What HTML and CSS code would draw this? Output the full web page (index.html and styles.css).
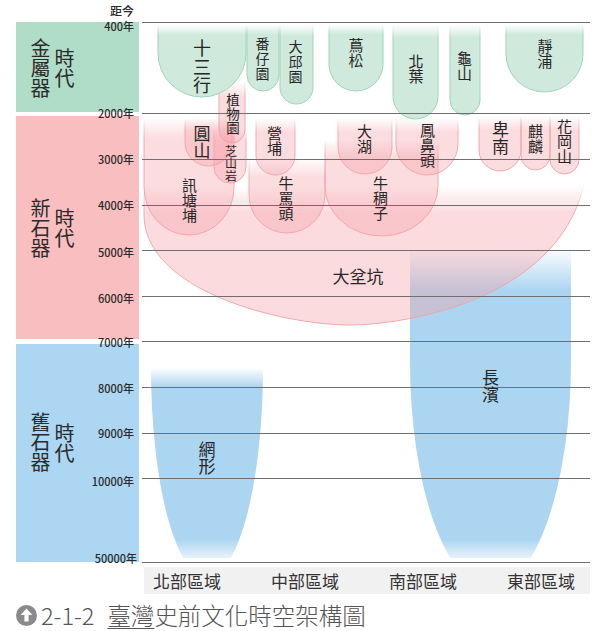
FILE: index.html
```
<!DOCTYPE html>
<html lang="zh-Hant">
<head>
<meta charset="utf-8">
<title>臺灣史前文化時空架構圖</title>
<link rel="stylesheet" href="styles.css">
</head>
<body>
<div class="figure">
  <div class="eras">
    <div class="era metal"><span class="col">金屬器</span><span class="col col2">時代</span></div>
    <div class="era neo"><span class="col">新石器</span><span class="col col2">時代</span></div>
    <div class="era paleo"><span class="col">舊石器</span><span class="col col2">時代</span></div>
  </div>
  <div class="regions">
    <span>北部區域</span><span>中部區域</span><span>南部區域</span><span>東部區域</span>
  </div>
  <div class="caption">
    <svg class="cap-icon" width="21" height="21" viewBox="0 0 21 21"><circle cx="10.5" cy="10.5" r="10.5" fill="#8a8a8a"/><path d="M10.5 3.6 L16.4 10 H12.6 V16.6 H8.4 V10 H4.6 Z" fill="#fff"/></svg>
    <span class="cap-num">2-1-2</span>
    <span class="cap-title"><span class="u">臺灣</span>史前文化時空架構圖</span>
  </div>

  <svg class="chart" width="616" height="565" viewBox="0 0 616 565">
    <defs>
      <linearGradient id="gF" x1="0" y1="0" x2="0" y2="1">
        <stop offset="0" stop-color="#cfeadd" stop-opacity="0"/>
        <stop offset="0.14" stop-color="#cfeadd" stop-opacity="1"/>
        <stop offset="1" stop-color="#cfeadd" stop-opacity="1"/>
      </linearGradient>
      <linearGradient id="gS" x1="0" y1="0" x2="0" y2="1">
        <stop offset="0" stop-color="#9ed3ba" stop-opacity="0"/>
        <stop offset="0.14" stop-color="#9ed3ba" stop-opacity="1"/>
        <stop offset="1" stop-color="#9ed3ba" stop-opacity="1"/>
      </linearGradient>
      <linearGradient id="pF" x1="0" y1="0" x2="0" y2="1">
        <stop offset="0" stop-color="#f4a0a8" stop-opacity="0"/>
        <stop offset="0.25" stop-color="#f4a0a8" stop-opacity="0.36"/>
        <stop offset="1" stop-color="#f4a0a8" stop-opacity="0.36"/>
      </linearGradient>
      <linearGradient id="pS" x1="0" y1="0" x2="0" y2="1">
        <stop offset="0" stop-color="#f1a1a9" stop-opacity="0"/>
        <stop offset="0.25" stop-color="#f1a1a9" stop-opacity="0.9"/>
        <stop offset="1" stop-color="#f1a1a9" stop-opacity="0.9"/>
      </linearGradient>
      <linearGradient id="pFT" x1="0" y1="0" x2="0" y2="1">
        <stop offset="0" stop-color="#f4a0a8" stop-opacity="0"/>
        <stop offset="0.17" stop-color="#f4a0a8" stop-opacity="0.36"/>
        <stop offset="1" stop-color="#f4a0a8" stop-opacity="0.36"/>
      </linearGradient>
      <linearGradient id="pST" x1="0" y1="0" x2="0" y2="1">
        <stop offset="0" stop-color="#f1a1a9" stop-opacity="0"/>
        <stop offset="0.17" stop-color="#f1a1a9" stop-opacity="0.9"/>
        <stop offset="1" stop-color="#f1a1a9" stop-opacity="0.9"/>
      </linearGradient>
      <linearGradient id="pBig" gradientUnits="userSpaceOnUse" x1="0" y1="185" x2="0" y2="325">
        <stop offset="0" stop-color="#f4a0a8" stop-opacity="0"/>
        <stop offset="0.2" stop-color="#f4a0a8" stop-opacity="0.38"/>
        <stop offset="1" stop-color="#f4a0a8" stop-opacity="0.38"/>
      </linearGradient>
      <linearGradient id="pBigS" gradientUnits="userSpaceOnUse" x1="0" y1="185" x2="0" y2="325">
        <stop offset="0" stop-color="#f1a1a9" stop-opacity="0"/>
        <stop offset="0.2" stop-color="#f1a1a9" stop-opacity="0.9"/>
        <stop offset="1" stop-color="#f1a1a9" stop-opacity="0.9"/>
      </linearGradient>
      <linearGradient id="bW" gradientUnits="userSpaceOnUse" x1="0" y1="368" x2="0" y2="558">
        <stop offset="0" stop-color="#acd5f1" stop-opacity="0"/>
        <stop offset="0.1" stop-color="#acd5f1" stop-opacity="1"/>
        <stop offset="0.9" stop-color="#acd5f1" stop-opacity="1"/>
        <stop offset="1" stop-color="#acd5f1" stop-opacity="0.3"/>
      </linearGradient>
      <linearGradient id="bC" gradientUnits="userSpaceOnUse" x1="0" y1="247" x2="0" y2="558">
        <stop offset="0" stop-color="#acd5f1" stop-opacity="0"/>
        <stop offset="0.14" stop-color="#acd5f1" stop-opacity="1"/>
        <stop offset="0.94" stop-color="#acd5f1" stop-opacity="1"/>
        <stop offset="1" stop-color="#acd5f1" stop-opacity="0.3"/>
      </linearGradient>
      <clipPath id="clipB"><rect x="0" y="0" width="616" height="558"/></clipPath>
    </defs>

    <!-- paleolithic -->
    <g clip-path="url(#clipB)">
      <path d="M151 368 A56 210 0 0 0 263 368 Z" fill="url(#bW)"/>
      <path d="M410 247 V361 A80.5 227 0 0 0 571 361 V247 Z" fill="url(#bC)"/>
    </g>

    <!-- neolithic -->
    <path d="M144 185 V215 C144 290 280 325 351 325 C395 325 555 305 584 185 Z" fill="url(#pBig)" stroke="url(#pBigS)"/>
    <g stroke-width="1">
      <path d="M144 118 V187 A45 48 0 0 0 234 187 V118 Z" fill="url(#pFT)" stroke="url(#pST)"/>
      <path d="M249 158 V195 A38 38 0 0 0 325 195 V158 Z" fill="url(#pF)" stroke="url(#pS)"/>
      <path d="M325 140 V186 A56.5 50 0 0 0 438 186 V140 Z" fill="url(#pFT)" stroke="url(#pST)"/>
      <path d="M214 128 V167 A16 16 0 0 0 246 167 V128 Z" fill="url(#pF)" stroke="url(#pS)"/>
      <path d="M219 82 V130 A13 13 0 0 0 245 130 V82 Z" fill="url(#pF)" stroke="url(#pS)"/>
      <path d="M185 118 V142.5 A23.5 23.5 0 0 0 232 142.5 V118 Z" fill="url(#pF)" stroke="url(#pS)"/>
      <path d="M256 118 V155.5 A19.5 19.5 0 0 0 295 155.5 V118 Z" fill="url(#pF)" stroke="url(#pS)"/>
      <path d="M338 118 V147 A27 27 0 0 0 392 147 V118 Z" fill="url(#pF)" stroke="url(#pS)"/>
      <path d="M396 118 V144 A31 31 0 0 0 458 144 V118 Z" fill="url(#pF)" stroke="url(#pS)"/>
      <path d="M479 116 V150 A21 21 0 0 0 521 150 V116 Z" fill="url(#pF)" stroke="url(#pS)"/>
      <path d="M521 116 V155.5 A14.5 14.5 0 0 0 550 155.5 V116 Z" fill="url(#pF)" stroke="url(#pS)"/>
      <path d="M550 116 V159.5 A14.5 14.5 0 0 0 579 159.5 V116 Z" fill="url(#pF)" stroke="url(#pS)"/>
    </g>

    <!-- metal age -->
    <g fill="url(#gF)" stroke="url(#gS)">
      <path d="M158 25 V53 A44 44 0 0 0 246 53 V25 Z"/>
      <path d="M247 25 V75 A16 16 0 0 0 279 75 V25 Z"/>
      <path d="M280 25 V87.5 A16.5 16.5 0 0 0 313 87.5 V25 Z"/>
      <path d="M329 25 V64 A27 27 0 0 0 383 64 V25 Z"/>
      <path d="M393 25 V96.5 A22.5 22.5 0 0 0 438 96.5 V25 Z"/>
      <path d="M450 25 V100 A15 15 0 0 0 480 100 V25 Z"/>
      <path d="M506 25 V54 A38.5 38 0 0 0 583 54 V25 Z"/>
    </g>

    <!-- grid -->
    <g class="grid">
      <line x1="142" y1="22.5" x2="590" y2="22.5"/>
      <line x1="142" y1="113.5" x2="590" y2="113.5"/>
      <line x1="142" y1="159.5" x2="590" y2="159.5"/>
      <line x1="142" y1="205.5" x2="590" y2="205.5"/>
      <line x1="142" y1="250.5" x2="590" y2="250.5"/>
      <line x1="142" y1="296.5" x2="590" y2="296.5"/>
      <line x1="142" y1="341.5" x2="590" y2="341.5"/>
      <line x1="142" y1="387.5" x2="590" y2="387.5"/>
      <line x1="142" y1="433.5" x2="590" y2="433.5"/>
      <line x1="142" y1="478.5" x2="590" y2="478.5"/>
      <line x1="142" y1="562.5" x2="590" y2="562.5"/>
    </g>

    <!-- axis -->
    <text class="ax ax-head" x="134" y="10.5">距今</text>
    <text class="ax" x="134" y="25.5">400年</text>
    <text class="ax" x="134" y="112.5">2000年</text>
    <text class="ax" x="134" y="158.5">3000年</text>
    <text class="ax" x="134" y="204.5">4000年</text>
    <text class="ax" x="134" y="252">5000年</text>
    <text class="ax" x="134" y="297.5">6000年</text>
    <text class="ax" x="134" y="342">7000年</text>
    <text class="ax" x="134" y="387.5">8000年</text>
    <text class="ax" x="134" y="432.5">9000年</text>
    <text class="ax" x="134" y="481">10000年</text>
    <text class="ax" x="137" y="557.5">50000年</text>

    <!-- site labels (vertical) -->
    <text class="v s18" x="202" y="39.5">十三行</text>
    <text class="v s14" x="262.5" y="36.5">番仔園</text>
    <text class="v s14" x="295.5" y="39.5">大邱園</text>
    <text class="v s15" x="356" y="38">蔦松</text>
    <text class="v s15" x="416" y="53.5">北葉</text>
    <text class="v s15" x="464.5" y="51">龜山</text>
    <text class="v s15" x="545" y="38.5">靜浦</text>

    <text class="v s13" x="233" y="93">植物園</text>
    <text class="v s12" x="231" y="145">芝山岩</text>
    <text class="v s17" x="202" y="125.5">圓山</text>
    <text class="v s15" x="189.5" y="178">訊塘埔</text>
    <text class="v s15" x="274.5" y="126">營埔</text>
    <text class="v s15" x="286" y="176">牛罵頭</text>
    <text class="v s15" x="364.5" y="124">大湖</text>
    <text class="v s15" x="427.5" y="122.5">鳳鼻頭</text>
    <text class="v s15" x="380.5" y="176">牛稠子</text>
    <text class="v s17" x="500.5" y="121.5">卑南</text>
    <text class="v s15" x="535.5" y="124">麒麟</text>
    <text class="v s15" x="564.5" y="119">花岡山</text>
    <text class="s s17" x="358" y="275">大坌坑</text>

    <text class="v s17" x="207" y="441.5">網形</text>
    <text class="v s17" x="490.5" y="369.5">長濱</text>
  </svg>
</div>
</body>
</html>
```

FILE: styles.css
```
* { box-sizing: border-box; }

body {
  margin: 0;
  background: #ffffff;
  font-family: "Noto Sans CJK TC", "Noto Sans", sans-serif;
}

.figure {
  position: relative;
  width: 616px;
  height: 631px;
  overflow: hidden;
}

.eras {
  display: flex;
  flex-direction: column;
  width: 139px;
  padding: 22px 0 0 16px;
}

.era {
  display: flex;
  align-items: flex-start;
  padding-left: 14px;
  color: #2b2b2b;
  font-size: 20px;
}

.era .col {
  writing-mode: vertical-rl;
  line-height: 20px;
}

.era .col2 {
  margin-left: 4px;
  margin-top: 10px;
}

.metal {
  height: 90px;
  padding-top: 16px;
  background: #b0ddc8;
}

.neo {
  height: 223px;
  margin-top: 4px;
  padding-top: 82px;
  background: #f9bec0;
}

.paleo {
  height: 218px;
  margin-top: 5px;
  padding-top: 68px;
  background: #acd6f2;
}

.paleo .col2 {
  margin-top: 11px;
}

.regions {
  display: flex;
  justify-content: space-between;
  align-items: center;
  width: 446px;
  height: 27px;
  margin: 5px 0 0 144px;
  padding: 0 15px 0 9px;
  background: #f1f1f1;
  color: #333333;
  font-size: 17px;
  line-height: 27px;
}

.caption {
  display: flex;
  align-items: center;
  margin: 6px 0 0 16px;
  color: #555555;
  font-size: 23.5px;
  font-weight: 300;
  line-height: 30px;
}

.cap-icon {
  display: block;
  flex: none;
}

.cap-num {
  margin-left: 4px;
}

.cap-title {
  margin-left: 13px;
}

.cap-title .u {
  text-decoration: underline;
  text-underline-offset: 3px;
  text-decoration-thickness: 1px;
}

.chart {
  position: absolute;
  top: 0;
  left: 0;
}

.grid line {
  stroke: #6f6f6f;
  stroke-width: 1;
}

.ax {
  font-family: "Noto Sans CJK TC", "Noto Sans", sans-serif;
  font-size: 11px;
  font-weight: 500;
  fill: #2a2a2a;
  text-anchor: end;
  dominant-baseline: central;
}

.ax-head {
  font-size: 12px;
}

.s {
  font-family: "Noto Sans CJK TC", "Noto Sans", sans-serif;
  fill: #262626;
  text-anchor: middle;
  dominant-baseline: central;
}

.v {
  font-family: "Noto Sans CJK TC", "Noto Sans", sans-serif;
  fill: #262626;
  writing-mode: vertical-rl;
  text-orientation: upright;
}

.s18 { font-size: 18px; letter-spacing: 0.5px; }
.s12 { font-size: 12px; letter-spacing: 0.5px; }
.s13 { font-size: 13.5px; letter-spacing: 0.5px; }
.s14 { font-size: 14px; letter-spacing: 1px; }
.s15 { font-size: 15px; }
.s17 { font-size: 17px; }
```
